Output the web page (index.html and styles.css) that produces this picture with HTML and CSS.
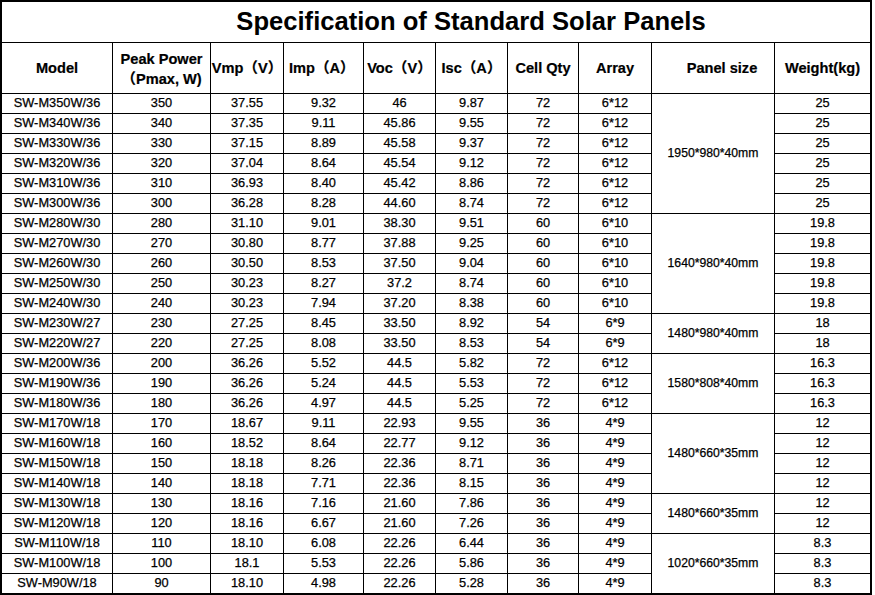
FILE: index.html
```html
<!DOCTYPE html>
<html>
<head>
<meta charset="utf-8">
<link rel="stylesheet" href="styles.css">
</head>
<body>
<div class="sheet">
  <div class="c title"><span class="title-text">Specification of Standard Solar Panels</span></div>
  <div class="c h">Model</div>
  <div class="c h two">Peak Power<br>（Pmax, W)</div>
  <div class="c h">Vmp（V）</div>
  <div class="c h left">Imp（A）</div>
  <div class="c h">Voc（V）</div>
  <div class="c h">Isc（A）</div>
  <div class="c h">Cell Qty</div>
  <div class="c h">Array</div>
  <div class="c h size-h">Panel size</div>
  <div class="c h">Weight(kg)</div>

  <div class="c">SW-M350W/36</div><div class="c">350</div><div class="c">37.55</div><div class="c">9.32</div><div class="c">46</div><div class="c">9.87</div><div class="c">72</div><div class="c">6*12</div><div class="c size span6">1950*980*40mm</div><div class="c">25</div>
  <div class="c">SW-M340W/36</div><div class="c">340</div><div class="c">37.35</div><div class="c">9.11</div><div class="c">45.86</div><div class="c">9.55</div><div class="c">72</div><div class="c">6*12</div><div class="c">25</div>
  <div class="c">SW-M330W/36</div><div class="c">330</div><div class="c">37.15</div><div class="c">8.89</div><div class="c">45.58</div><div class="c">9.37</div><div class="c">72</div><div class="c">6*12</div><div class="c">25</div>
  <div class="c">SW-M320W/36</div><div class="c">320</div><div class="c">37.04</div><div class="c">8.64</div><div class="c">45.54</div><div class="c">9.12</div><div class="c">72</div><div class="c">6*12</div><div class="c">25</div>
  <div class="c">SW-M310W/36</div><div class="c">310</div><div class="c">36.93</div><div class="c">8.40</div><div class="c">45.42</div><div class="c">8.86</div><div class="c">72</div><div class="c">6*12</div><div class="c">25</div>
  <div class="c">SW-M300W/36</div><div class="c">300</div><div class="c">36.28</div><div class="c">8.28</div><div class="c">44.60</div><div class="c">8.74</div><div class="c">72</div><div class="c">6*12</div><div class="c">25</div>

  <div class="c">SW-M280W/30</div><div class="c">280</div><div class="c">31.10</div><div class="c">9.01</div><div class="c">38.30</div><div class="c">9.51</div><div class="c">60</div><div class="c">6*10</div><div class="c size span5">1640*980*40mm</div><div class="c">19.8</div>
  <div class="c">SW-M270W/30</div><div class="c">270</div><div class="c">30.80</div><div class="c">8.77</div><div class="c">37.88</div><div class="c">9.25</div><div class="c">60</div><div class="c">6*10</div><div class="c">19.8</div>
  <div class="c">SW-M260W/30</div><div class="c">260</div><div class="c">30.50</div><div class="c">8.53</div><div class="c">37.50</div><div class="c">9.04</div><div class="c">60</div><div class="c">6*10</div><div class="c">19.8</div>
  <div class="c">SW-M250W/30</div><div class="c">250</div><div class="c">30.23</div><div class="c">8.27</div><div class="c">37.2</div><div class="c">8.74</div><div class="c">60</div><div class="c">6*10</div><div class="c">19.8</div>
  <div class="c">SW-M240W/30</div><div class="c">240</div><div class="c">30.23</div><div class="c">7.94</div><div class="c">37.20</div><div class="c">8.38</div><div class="c">60</div><div class="c">6*10</div><div class="c">19.8</div>

  <div class="c">SW-M230W/27</div><div class="c">230</div><div class="c">27.25</div><div class="c">8.45</div><div class="c">33.50</div><div class="c">8.92</div><div class="c">54</div><div class="c">6*9</div><div class="c size span2">1480*980*40mm</div><div class="c">18</div>
  <div class="c">SW-M220W/27</div><div class="c">220</div><div class="c">27.25</div><div class="c">8.08</div><div class="c">33.50</div><div class="c">8.53</div><div class="c">54</div><div class="c">6*9</div><div class="c">18</div>

  <div class="c">SW-M200W/36</div><div class="c">200</div><div class="c">36.26</div><div class="c">5.52</div><div class="c">44.5</div><div class="c">5.82</div><div class="c">72</div><div class="c">6*12</div><div class="c size span3">1580*808*40mm</div><div class="c">16.3</div>
  <div class="c">SW-M190W/36</div><div class="c">190</div><div class="c">36.26</div><div class="c">5.24</div><div class="c">44.5</div><div class="c">5.53</div><div class="c">72</div><div class="c">6*12</div><div class="c">16.3</div>
  <div class="c">SW-M180W/36</div><div class="c">180</div><div class="c">36.26</div><div class="c">4.97</div><div class="c">44.5</div><div class="c">5.25</div><div class="c">72</div><div class="c">6*12</div><div class="c">16.3</div>

  <div class="c">SW-M170W/18</div><div class="c">170</div><div class="c">18.67</div><div class="c">9.11</div><div class="c">22.93</div><div class="c">9.55</div><div class="c">36</div><div class="c">4*9</div><div class="c size span4">1480*660*35mm</div><div class="c">12</div>
  <div class="c">SW-M160W/18</div><div class="c">160</div><div class="c">18.52</div><div class="c">8.64</div><div class="c">22.77</div><div class="c">9.12</div><div class="c">36</div><div class="c">4*9</div><div class="c">12</div>
  <div class="c">SW-M150W/18</div><div class="c">150</div><div class="c">18.18</div><div class="c">8.26</div><div class="c">22.36</div><div class="c">8.71</div><div class="c">36</div><div class="c">4*9</div><div class="c">12</div>
  <div class="c">SW-M140W/18</div><div class="c">140</div><div class="c">18.18</div><div class="c">7.71</div><div class="c">22.36</div><div class="c">8.15</div><div class="c">36</div><div class="c">4*9</div><div class="c">12</div>

  <div class="c">SW-M130W/18</div><div class="c">130</div><div class="c">18.16</div><div class="c">7.16</div><div class="c">21.60</div><div class="c">7.86</div><div class="c">36</div><div class="c">4*9</div><div class="c size span2">1480*660*35mm</div><div class="c">12</div>
  <div class="c">SW-M120W/18</div><div class="c">120</div><div class="c">18.16</div><div class="c">6.67</div><div class="c">21.60</div><div class="c">7.26</div><div class="c">36</div><div class="c">4*9</div><div class="c">12</div>

  <div class="c">SW-M110W/18</div><div class="c">110</div><div class="c">18.10</div><div class="c">6.08</div><div class="c">22.26</div><div class="c">6.44</div><div class="c">36</div><div class="c">4*9</div><div class="c size span3">1020*660*35mm</div><div class="c">8.3</div>
  <div class="c">SW-M100W/18</div><div class="c">100</div><div class="c">18.1</div><div class="c">5.53</div><div class="c">22.26</div><div class="c">5.86</div><div class="c">36</div><div class="c">4*9</div><div class="c">8.3</div>
  <div class="c">SW-M90W/18</div><div class="c">90</div><div class="c">18.10</div><div class="c">4.98</div><div class="c">22.26</div><div class="c">5.28</div><div class="c">36</div><div class="c">4*9</div><div class="c">8.3</div>
</div>
</body>
</html>
```

FILE: styles.css
```css
html, body {
  margin: 0;
  padding: 0;
  background: #ffffff;
}

.sheet {
  display: grid;
  width: 868px;
  grid-template-columns: 110px 97px 72px 79px 71px 71px 70px 72px 122px 95px;
  grid-template-rows: 40px 50px repeat(25, 19px);
  gap: 1px;
  padding: 2px;
  background: #000000;
  font-family: "Liberation Sans", Arial, "Noto Sans CJK TC", sans-serif;
  font-size: 12.8px;
  color: #000000;
  -webkit-text-stroke: 0.25px #000000;
}

.c {
  background: #ffffff;
  display: flex;
  align-items: center;
  justify-content: center;
  text-align: center;
  white-space: nowrap;
  line-height: 1;
}

.title {
  grid-column: 1 / -1;
  padding-left: 70px;
}

.title-text {
  font-size: 25.6px;
  font-weight: bold;
  -webkit-text-stroke: 0;
}

.h {
  font-size: 14.6px;
  font-weight: bold;
  -webkit-text-stroke: 0.2px #000000;
}

.h.two {
  line-height: 20px;
  padding-top: 1px;
}

.h.left {
  justify-content: flex-start;
  padding-left: 5px;
}

.size-h {
  padding-left: 18px;
}

.size {
  font-size: 12.2px;
}

.span2 { grid-row: span 2; }
.span3 { grid-row: span 3; }
.span4 { grid-row: span 4; }
.span5 { grid-row: span 5; }
.span6 { grid-row: span 6; }
```
